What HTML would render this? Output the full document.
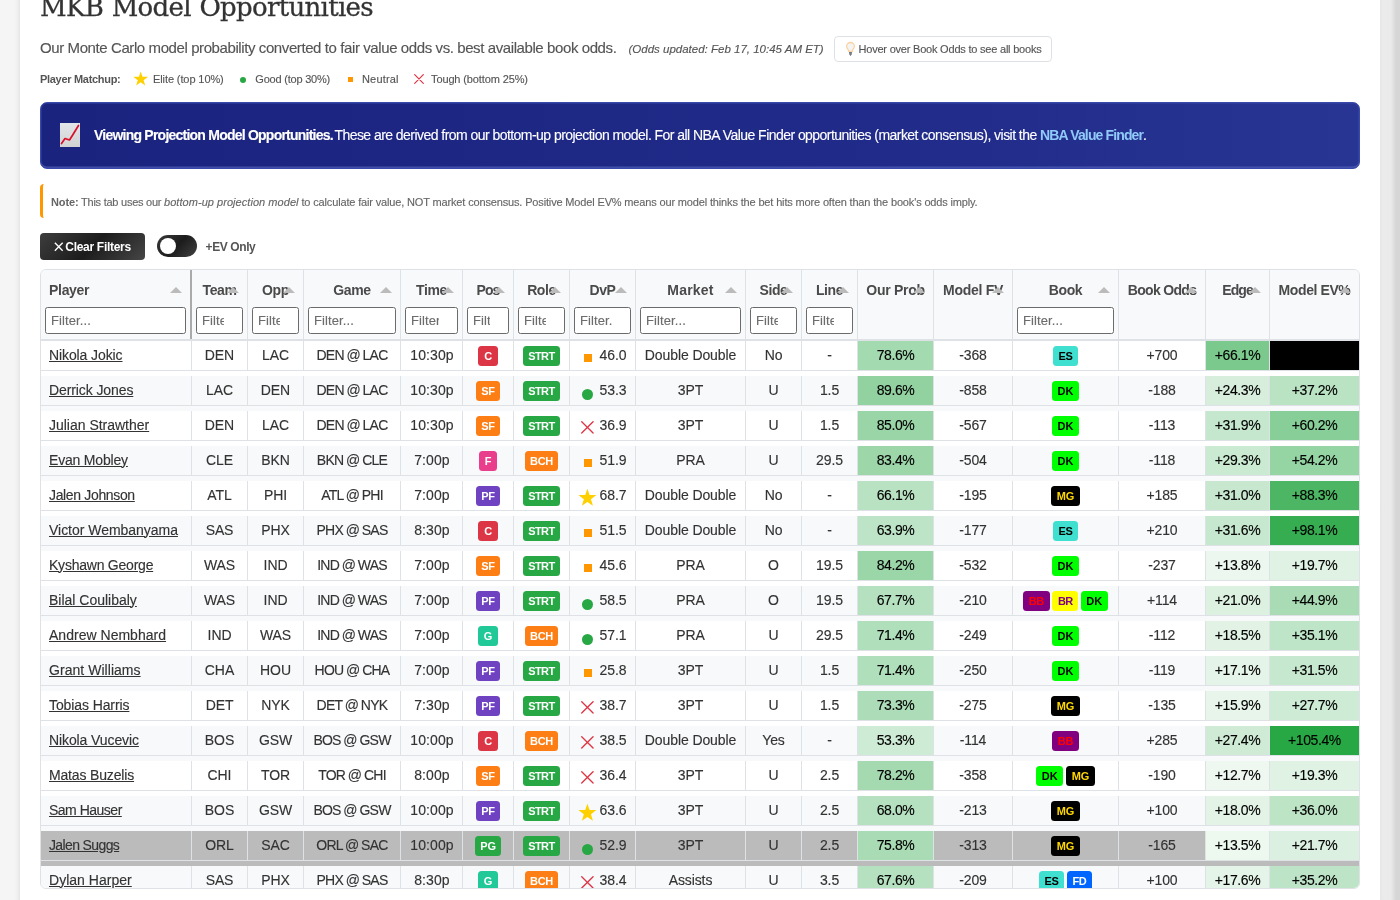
<!DOCTYPE html>
<html lang="en">
<head>
<meta charset="utf-8">
<title>MKB Model Opportunities</title>
<style>
*{box-sizing:border-box;margin:0;padding:0}
html,body{width:1400px;height:900px;overflow:hidden}
body{background:#f5f5f5;font-family:"Liberation Sans",sans-serif;color:#333;position:relative}
#root{position:absolute;left:0;top:0;width:1400px;height:900px;overflow:hidden;will-change:transform}
.page{position:absolute;left:20px;top:-40px;width:1360px;height:980px;background:#fff;box-shadow:0 0 6px rgba(0,0,0,.13)}
.rstrip{position:absolute;left:1380px;top:0;width:20px;height:900px;background:linear-gradient(90deg,#e5e6e6 0,#ebebeb 3px,#eaeaea 11px,#e2e2e2 13px,#d6d6d6 16px,#d6d6d6 20px)}
.t{position:absolute;white-space:pre;line-height:1}
.title{left:40px;top:-8.500px;font:400 26px/30px "DejaVu Serif","Liberation Serif",serif;color:#333;letter-spacing:-.69px;word-spacing:1px;-webkit-text-stroke:.3px #333}
.sub{left:40px;top:38px;font-size:15px;line-height:20px;color:#555;letter-spacing:-.405px}
.upd{left:628.500px;top:40px;font-size:11.500px;line-height:18px;color:#555;font-style:italic;letter-spacing:0}
.tip{position:absolute;left:834px;top:36px;width:218px;height:26px;border:1px solid #dee2e6;border-radius:4px;background:#fff}
.tip .t{left:23.500px;top:5px;font-size:11px;line-height:14px;color:#555;letter-spacing:-.21px}
.tip svg{position:absolute;left:9px;top:4px}
.lg{font-size:11px;line-height:14px;color:#555;top:72px}
.lg.b{font-weight:700;letter-spacing:-.3px}
.banner{position:absolute;left:40px;top:102px;width:1320px;height:67px;border-radius:7px;border:1px solid #3949ab;box-shadow:inset 0 0 0 1px rgba(57,73,171,.45),inset 0 -1.500px 0 rgba(110,125,205,.5);background:linear-gradient(90deg,#1a237e 0%,#202a88 60%,#283593 100%)}
.banner .t{top:23.100px;font-size:14px;line-height:18px;color:#fff}
.banner svg{position:absolute;left:18px;top:19px}
.note{position:absolute;left:40px;top:184px;width:1320px;height:34px;border-left:3px solid #ff9800;border-radius:4px;background:#fff}
.note .t{left:8px;top:11.700px;font-size:11px;line-height:13px;color:#666;letter-spacing:-.13px}
.btn{position:absolute;left:40px;top:233px;width:105px;height:27px;border-radius:4px;background:linear-gradient(135deg,#3d3d3d 0%,#1c1c1c 50%,#464646 100%);color:#fff}
.btn .t{left:25.300px;top:6.700px;font-size:12px;line-height:15px;font-weight:700;letter-spacing:-.3px;color:#fff}
.btn svg{position:absolute;left:14px;top:9.300px}
.tog{position:absolute;left:157px;top:235px;width:40px;height:22px;border-radius:11px;background:linear-gradient(135deg,#3a3a3a 0%,#1c1c1c 50%,#424242 100%)}
.tog i{position:absolute;left:3px;top:3px;width:16px;height:16px;border-radius:50%;background:#fff}
.evo{left:205.600px;top:239.500px;font-size:12px;line-height:15px;font-weight:700;color:#555;letter-spacing:-.405px}

.tbl{position:absolute;left:40px;top:269px;width:1320px;height:620px;border:1px solid #dee2e6;border-radius:6px;overflow:hidden;background:#fff;font-size:14px}
.thead{display:flex;height:71px;background:#f8f9fa;border-bottom:2px solid #dee2e6}
.h{position:relative;height:69px;border-right:1px solid #dee2e6;flex:none}
.h.hp{border-right:2px solid #aaa}
.ht{position:absolute;left:0;right:0;top:11.300px;height:18px;line-height:18px;text-align:center;font-weight:700;color:#4a4a4a;white-space:nowrap;letter-spacing:-.4px}
.hp .ht{text-align:left;padding-left:8px}
.ar{position:absolute;right:8px;top:16.700px;width:0;height:0;border-left:6px solid transparent;border-right:6px solid transparent;border-bottom:6px solid #bbb}
.fi{position:absolute;left:4px;right:4px;top:37px;height:27px;border:1px solid #6b6b6b;border-radius:2.500px;background:#fff;overflow:hidden}
.fi span{position:absolute;left:5px;right:18px;overflow:hidden;top:5px;font-size:13px;line-height:15px;color:#6c6c6c;white-space:nowrap;letter-spacing:.1px}
.r{display:flex;height:35px;background:#fff}
.r.ev{background:#f8f9fa}
.r.hv{background:#bbb}
.c{flex:none;height:30px;border-right:1px solid #dee2e6;border-bottom:1px solid #dee2e6;display:flex;align-items:center;justify-content:center;white-space:nowrap;color:#333;letter-spacing:-.1px;position:relative;padding-bottom:2px}
.c,.sub,.upd,.lg,.note .t,.tip .t,.banner .t,.fi span{-webkit-text-stroke:.13px currentColor}
.bd,.lg.b,b,.ht{-webkit-text-stroke:0 transparent}
.c.pl{justify-content:flex-start;padding-left:8px}
.c.gm{letter-spacing:-.75px;word-spacing:-.5px}
.c.tm{letter-spacing:.1px;padding-left:1px}
.c.pl a{text-decoration:underline;color:#333}
.c.g{color:#000;letter-spacing:-.4px}
.bd{display:inline-block;height:19.800px;line-height:20.600px;padding:0 5.500px;border-radius:3.500px;text-align:center;font-size:11px;font-weight:700;color:#fff;letter-spacing:-.3px;margin-top:3.200px}
.bk .bd{margin-left:1.400px;margin-right:1.400px}
.pC{background:#dc3545;min-width:19.400px}.pSF{background:#fd7e14}.pF{background:#e83e8c}.pPF{background:#6f42c1}.pG{background:#20c997}.pPG{background:#28a745}
.rSTRT{background:#28a745;letter-spacing:-.55px;padding:0 5.700px 0 5.500px}.rBCH{background:#fd7e14}
.kES{background:#40e0d0;color:#000}.kDK{background:#00ff00;color:#000;letter-spacing:.1px}.kMG{background:#000;color:#ffd700;letter-spacing:-.1px}.kBB{background:#800080;color:#ff0000;letter-spacing:-.2px}.kBR{background:#ffff00;color:#800080;letter-spacing:-.65px}.kFD{background:#0066ff;color:#fff}
.dvp{justify-content:flex-start}
.ic{position:absolute;display:block}
.ic.sq{left:14px;top:13px;width:8px;height:8px;background:#ff9800}
.ic.ci{left:12px;top:12.5px;width:11px;height:11px;border-radius:50%;background:#28a745}
.ic.xx{left:10.900px;top:10.100px;width:12.800px;height:12.800px}
.ic.st{left:8.300px;top:7.100px;width:18.800px;height:18.800px}
.ic svg{display:block}
.dv{position:absolute;right:8.400px;top:0;line-height:29px;letter-spacing:-.05px}
</style>
</head>
<body>
<div id="root">
<div class="page"></div>
<div class="rstrip"></div>

<div class="t title">MKB Model Opportunities</div>
<div class="t sub">Our Monte Carlo model probability converted to fair value odds vs. best available book odds.</div>
<div class="t upd">(Odds updated: Feb 17, 10:45 AM ET)</div>
<div class="tip">
<svg width="12" height="17" viewBox="0 0 12 17"><path d="M6.500 1.500c-2.300 0-3.900 1.700-3.900 3.800 0 1.400.7 2.300 1.400 3.100.5.600.8 1.200.8 1.900h3.400c0-.7.300-1.300.8-1.900.7-.8 1.400-1.700 1.400-3.100 0-2.100-1.600-3.800-3.900-3.800z" fill="#f4f4f4" stroke="#fbd3a0" stroke-width="1.300"/><path d="M4.900 11h3.200l-.4 2.200-1.200 2-1.200-2z" fill="#777c85"/></svg>
<div class="t">Hover over Book Odds to see all books</div>
</div>

<div class="t lg b" style="left:40px">Player Matchup:</div>
<svg style="position:absolute;left:133.200px;top:71px" width="15.400" height="15.400" viewBox="0 0 18 18"><path d="M9 0.6 L11.1 6.6 L17.6 6.8 L12.4 10.700 L14.3 17 L9 13.3 L3.700 17 L5.600 10.700 L0.400 6.800 L6.900 6.600 Z" fill="#ffd000"/></svg>
<div class="t lg" style="left:153px;letter-spacing:-.1px">Elite (top 10%)</div>
<i style="position:absolute;left:240px;top:76.800px;width:6.300px;height:6.300px;border-radius:50%;background:#28a745"></i>
<div class="t lg" style="left:255.300px;letter-spacing:-.21px">Good (top 30%)</div>
<i style="position:absolute;left:348px;top:77px;width:5px;height:5px;background:#ff9800"></i>
<div class="t lg" style="left:362px;letter-spacing:.18px">Neutral</div>
<svg style="position:absolute;left:414px;top:74px" width="10" height="10" viewBox="0 0 10 10"><path d="M.7.700l8.600 8.600M9.300.700L.7 9.300" stroke="#dc3545" stroke-width="1.200" fill="none" stroke-linecap="round"/></svg>
<div class="t lg" style="left:431px;letter-spacing:-.12px">Tough (bottom 25%)</div>

<div class="banner">
<svg width="22" height="26" viewBox="0 0 22 26"><defs><linearGradient id="cg" x1="0" y1="0" x2="0" y2="1"><stop offset="0" stop-color="#e2e5e9"/><stop offset="1" stop-color="#d2d2d2"/></linearGradient></defs><rect x="1" y="1" width="20" height="24" fill="url(#cg)"/><path d="M2.500 21.500l3.500-5 4.500 1.500 3.500-5.500L19.500 3.500" stroke="#d8102a" stroke-width="1.700" fill="none" stroke-linejoin="round" stroke-linecap="round"/></svg>
<div class="t" style="left:53px;font-weight:700;letter-spacing:-.77px">Viewing Projection Model Opportunities.</div>
<div class="t" style="left:293.400px;letter-spacing:-.545px">These are derived from our bottom-up projection model. For all NBA Value Finder opportunities (market consensus), visit the <b style="color:#90caf9;letter-spacing:-.87px">NBA Value Finder</b>.</div>
</div>

<div class="note"><div class="t"><b>Note:</b><span style="letter-spacing:-.25px"> This tab uses our </span><i style="letter-spacing:.047px">bottom-up projection model</i><span style="letter-spacing:-.153px"> to calculate fair value, NOT market consensus. Positive Model EV% means our model thinks the bet hits more often than the book's odds imply.</span></div></div>

<div class="btn"><svg width="9.500" height="9.500" viewBox="0 0 9 9"><path d="M.8.800l7.400 7.400M8.200.800L.8 8.200" stroke="#fff" stroke-width="1.300" fill="none"/></svg><div class="t">Clear Filters</div></div>
<div class="tog"><i></i></div>
<div class="t evo">+EV Only</div>

<div class="tbl">
<div class="thead"><div class="h hp" style="width:151px"><div class="ht" style="letter-spacing:-0.3px"><span>Player</span></div><i class="ar"></i><div class="fi"><span>Filter...</span></div></div><div class="h" style="width:56px"><div class="ht"><span>Team</span></div><i class="ar"></i><div class="fi"><span>Filter...</span></div></div><div class="h" style="width:56px"><div class="ht"><span>Opp</span></div><i class="ar"></i><div class="fi"><span>Filter...</span></div></div><div class="h" style="width:97px"><div class="ht"><span>Game</span></div><i class="ar"></i><div class="fi"><span>Filter...</span></div></div><div class="h" style="width:62px"><div class="ht"><span>Time</span></div><i class="ar"></i><div class="fi"><span>Filter...</span></div></div><div class="h" style="width:51px"><div class="ht" style="letter-spacing:-0.9px"><span>Pos</span></div><i class="ar"></i><div class="fi"><span>Filter...</span></div></div><div class="h" style="width:56px"><div class="ht"><span>Role</span></div><i class="ar"></i><div class="fi"><span>Filter...</span></div></div><div class="h" style="width:66px"><div class="ht"><span>DvP</span></div><i class="ar"></i><div class="fi"><span>Filter...</span></div></div><div class="h" style="width:110px"><div class="ht" style="letter-spacing:0.2px"><span>Market</span></div><i class="ar"></i><div class="fi"><span>Filter...</span></div></div><div class="h" style="width:56px"><div class="ht"><span>Side</span></div><i class="ar"></i><div class="fi"><span>Filter...</span></div></div><div class="h" style="width:56px"><div class="ht"><span>Line</span></div><i class="ar"></i><div class="fi"><span>Filter...</span></div></div><div class="h" style="width:76px"><div class="ht" style="letter-spacing:-0.29px"><span>Our Prob</span></div><i class="ar"></i></div><div class="h" style="width:79px"><div class="ht" style="letter-spacing:-0.29px"><span>Model FV</span></div><i class="ar"></i></div><div class="h" style="width:106px"><div class="ht"><span>Book</span></div><i class="ar"></i><div class="fi"><span>Filter...</span></div></div><div class="h" style="width:87px"><div class="ht" style="letter-spacing:-0.69px"><span>Book Odds</span></div><i class="ar"></i></div><div class="h" style="width:64px"><div class="ht" style="letter-spacing:-0.93px"><span>Edge</span></div><i class="ar"></i></div><div class="h" style="width:90px"><div class="ht"><span>Model EV%</span></div><i class="ar"></i></div></div>
<div class="tbody"><div class="r"><div class="c pl" style="width:151px;"><a style="letter-spacing:-0.100px">Nikola Jokic</a></div><div class="c" style="width:56px;">DEN</div><div class="c" style="width:56px;">LAC</div><div class="c gm" style="width:97px;">DEN @ LAC</div><div class="c tm" style="width:62px;">10:30p</div><div class="c" style="width:51px;"><b class="bd pC">C</b></div><div class="c" style="width:56px;"><b class="bd rSTRT">STRT</b></div><div class="c dvp" style="width:66px;"><i class="ic sq"></i><span class="dv">46.0</span></div><div class="c" style="width:110px;">Double Double</div><div class="c" style="width:56px;">No</div><div class="c" style="width:56px;">-</div><div class="c g" style="width:76px;background:#a4dab0;">78.6%</div><div class="c" style="width:79px;">-368</div><div class="c bk" style="width:106px;"><b class="bd kES">ES</b></div><div class="c" style="width:87px;">+700</div><div class="c g" style="width:64px;background:#7cc98d;">+66.1%</div><div class="c g" style="width:90px;background:#000;color:#000;">+528.8%</div></div>
<div class="r ev"><div class="c pl" style="width:151px;"><a style="letter-spacing:-0.100px">Derrick Jones</a></div><div class="c" style="width:56px;">LAC</div><div class="c" style="width:56px;">DEN</div><div class="c gm" style="width:97px;">DEN @ LAC</div><div class="c tm" style="width:62px;">10:30p</div><div class="c" style="width:51px;"><b class="bd pSF">SF</b></div><div class="c" style="width:56px;"><b class="bd rSTRT">STRT</b></div><div class="c dvp" style="width:66px;"><i class="ic ci"></i><span class="dv">53.3</span></div><div class="c" style="width:110px;">3PT</div><div class="c" style="width:56px;">U</div><div class="c" style="width:56px;">1.5</div><div class="c g" style="width:76px;background:#92d2a0;">89.6%</div><div class="c" style="width:79px;">-858</div><div class="c bk" style="width:106px;"><b class="bd kDK">DK</b></div><div class="c" style="width:87px;">-188</div><div class="c g" style="width:64px;background:#d6eedb;">+24.3%</div><div class="c g" style="width:90px;background:#bae3c3;">+37.2%</div></div>
<div class="r"><div class="c pl" style="width:151px;"><a style="letter-spacing:-0.013px">Julian Strawther</a></div><div class="c" style="width:56px;">DEN</div><div class="c" style="width:56px;">LAC</div><div class="c gm" style="width:97px;">DEN @ LAC</div><div class="c tm" style="width:62px;">10:30p</div><div class="c" style="width:51px;"><b class="bd pSF">SF</b></div><div class="c" style="width:56px;"><b class="bd rSTRT">STRT</b></div><div class="c dvp" style="width:66px;"><i class="ic xx"><svg width="12.8" height="12.8" viewBox="0 0 14 14"><path d="M0.8 0.8 L13.2 13.2 M13.2 0.8 L0.8 13.2" stroke="#dc3545" stroke-width="1.45" fill="none" stroke-linecap="round"/></svg></i><span class="dv">36.9</span></div><div class="c" style="width:110px;">3PT</div><div class="c" style="width:56px;">U</div><div class="c" style="width:56px;">1.5</div><div class="c g" style="width:76px;background:#99d5a7;">85.0%</div><div class="c" style="width:79px;">-567</div><div class="c bk" style="width:106px;"><b class="bd kDK">DK</b></div><div class="c" style="width:87px;">-113</div><div class="c g" style="width:64px;background:#c5e7cd;">+31.9%</div><div class="c g" style="width:90px;background:#88ce98;">+60.2%</div></div>
<div class="r ev"><div class="c pl" style="width:151px;"><a style="letter-spacing:-0.191px">Evan Mobley</a></div><div class="c" style="width:56px;">CLE</div><div class="c" style="width:56px;">BKN</div><div class="c gm" style="width:97px;">BKN @ CLE</div><div class="c tm" style="width:62px;">7:00p</div><div class="c" style="width:51px;"><b class="bd pF">F</b></div><div class="c" style="width:56px;"><b class="bd rBCH">BCH</b></div><div class="c dvp" style="width:66px;"><i class="ic sq"></i><span class="dv">51.9</span></div><div class="c" style="width:110px;">PRA</div><div class="c" style="width:56px;">U</div><div class="c" style="width:56px;">29.5</div><div class="c g" style="width:76px;background:#9cd6a9;">83.4%</div><div class="c" style="width:79px;">-504</div><div class="c bk" style="width:106px;"><b class="bd kDK">DK</b></div><div class="c" style="width:87px;">-118</div><div class="c g" style="width:64px;background:#cbead2;">+29.3%</div><div class="c g" style="width:90px;background:#95d4a3;">+54.2%</div></div>
<div class="r"><div class="c pl" style="width:151px;"><a style="letter-spacing:-0.346px">Jalen Johnson</a></div><div class="c" style="width:56px;">ATL</div><div class="c" style="width:56px;">PHI</div><div class="c gm" style="width:97px;">ATL @ PHI</div><div class="c tm" style="width:62px;">7:00p</div><div class="c" style="width:51px;"><b class="bd pPF">PF</b></div><div class="c" style="width:56px;"><b class="bd rSTRT">STRT</b></div><div class="c dvp" style="width:66px;"><i class="ic st"><svg width="18.8" height="18.8" viewBox="0 0 18 18"><path d="M9 0.6 L11.1 6.6 L17.6 6.8 L12.4 10.7 L14.3 17 L9 13.3 L3.7 17 L5.6 10.7 L0.4 6.8 L6.9 6.6 Z" fill="#ffd000"/></svg></i><span class="dv">68.7</span></div><div class="c" style="width:110px;">Double Double</div><div class="c" style="width:56px;">No</div><div class="c" style="width:56px;">-</div><div class="c g" style="width:76px;background:#b9e2c2;">66.1%</div><div class="c" style="width:79px;">-195</div><div class="c bk" style="width:106px;"><b class="bd kMG">MG</b></div><div class="c" style="width:87px;">+185</div><div class="c g" style="width:64px;background:#c7e8cf;">+31.0%</div><div class="c g" style="width:90px;background:#4cb664;">+88.3%</div></div>
<div class="r ev"><div class="c pl" style="width:151px;"><a style="letter-spacing:-0.029px">Victor Wembanyama</a></div><div class="c" style="width:56px;">SAS</div><div class="c" style="width:56px;">PHX</div><div class="c gm" style="width:97px;">PHX @ SAS</div><div class="c tm" style="width:62px;">8:30p</div><div class="c" style="width:51px;"><b class="bd pC">C</b></div><div class="c" style="width:56px;"><b class="bd rSTRT">STRT</b></div><div class="c dvp" style="width:66px;"><i class="ic sq"></i><span class="dv">51.5</span></div><div class="c" style="width:110px;">Double Double</div><div class="c" style="width:56px;">No</div><div class="c" style="width:56px;">-</div><div class="c g" style="width:76px;background:#bde4c6;">63.9%</div><div class="c" style="width:79px;">-177</div><div class="c bk" style="width:106px;"><b class="bd kES">ES</b></div><div class="c" style="width:87px;">+210</div><div class="c g" style="width:64px;background:#c6e8ce;">+31.6%</div><div class="c g" style="width:90px;background:#37ad52;">+98.1%</div></div>
<div class="r"><div class="c pl" style="width:151px;"><a style="letter-spacing:-0.229px">Kyshawn George</a></div><div class="c" style="width:56px;">WAS</div><div class="c" style="width:56px;">IND</div><div class="c gm" style="width:97px;">IND @ WAS</div><div class="c tm" style="width:62px;">7:00p</div><div class="c" style="width:51px;"><b class="bd pSF">SF</b></div><div class="c" style="width:56px;"><b class="bd rSTRT">STRT</b></div><div class="c dvp" style="width:66px;"><i class="ic sq"></i><span class="dv">45.6</span></div><div class="c" style="width:110px;">PRA</div><div class="c" style="width:56px;">O</div><div class="c" style="width:56px;">19.5</div><div class="c g" style="width:76px;background:#9bd6a8;">84.2%</div><div class="c" style="width:79px;">-532</div><div class="c bk" style="width:106px;"><b class="bd kDK">DK</b></div><div class="c" style="width:87px;">-237</div><div class="c g" style="width:64px;background:#ecf7ef;">+13.8%</div><div class="c g" style="width:90px;background:#dff2e4;">+19.7%</div></div>
<div class="r ev"><div class="c pl" style="width:151px;"><a style="letter-spacing:-0.007px">Bilal Coulibaly</a></div><div class="c" style="width:56px;">WAS</div><div class="c" style="width:56px;">IND</div><div class="c gm" style="width:97px;">IND @ WAS</div><div class="c tm" style="width:62px;">7:00p</div><div class="c" style="width:51px;"><b class="bd pPF">PF</b></div><div class="c" style="width:56px;"><b class="bd rSTRT">STRT</b></div><div class="c dvp" style="width:66px;"><i class="ic ci"></i><span class="dv">58.5</span></div><div class="c" style="width:110px;">PRA</div><div class="c" style="width:56px;">O</div><div class="c" style="width:56px;">19.5</div><div class="c g" style="width:76px;background:#b6e1c0;">67.7%</div><div class="c" style="width:79px;">-210</div><div class="c bk" style="width:106px;"><b class="bd kBB">BB</b><b class="bd kBR">BR</b><b class="bd kDK">DK</b></div><div class="c" style="width:87px;">+114</div><div class="c g" style="width:64px;background:#ddf1e1;">+21.0%</div><div class="c g" style="width:90px;background:#a9dcb5;">+44.9%</div></div>
<div class="r"><div class="c pl" style="width:151px;"><a style="letter-spacing:0.020px">Andrew Nembhard</a></div><div class="c" style="width:56px;">IND</div><div class="c" style="width:56px;">WAS</div><div class="c gm" style="width:97px;">IND @ WAS</div><div class="c tm" style="width:62px;">7:00p</div><div class="c" style="width:51px;"><b class="bd pG">G</b></div><div class="c" style="width:56px;"><b class="bd rBCH">BCH</b></div><div class="c dvp" style="width:66px;"><i class="ic ci"></i><span class="dv">57.1</span></div><div class="c" style="width:110px;">PRA</div><div class="c" style="width:56px;">U</div><div class="c" style="width:56px;">29.5</div><div class="c g" style="width:76px;background:#b0dfbb;">71.4%</div><div class="c" style="width:79px;">-249</div><div class="c bk" style="width:106px;"><b class="bd kDK">DK</b></div><div class="c" style="width:87px;">-112</div><div class="c g" style="width:64px;background:#e2f3e6;">+18.5%</div><div class="c g" style="width:90px;background:#bee5c7;">+35.1%</div></div>
<div class="r ev"><div class="c pl" style="width:151px;"><a style="letter-spacing:0.043px">Grant Williams</a></div><div class="c" style="width:56px;">CHA</div><div class="c" style="width:56px;">HOU</div><div class="c gm" style="width:97px;">HOU @ CHA</div><div class="c tm" style="width:62px;">7:00p</div><div class="c" style="width:51px;"><b class="bd pPF">PF</b></div><div class="c" style="width:56px;"><b class="bd rSTRT">STRT</b></div><div class="c dvp" style="width:66px;"><i class="ic sq"></i><span class="dv">25.8</span></div><div class="c" style="width:110px;">3PT</div><div class="c" style="width:56px;">U</div><div class="c" style="width:56px;">1.5</div><div class="c g" style="width:76px;background:#b0dfbb;">71.4%</div><div class="c" style="width:79px;">-250</div><div class="c bk" style="width:106px;"><b class="bd kDK">DK</b></div><div class="c" style="width:87px;">-119</div><div class="c g" style="width:64px;background:#e5f4e8;">+17.1%</div><div class="c g" style="width:90px;background:#c6e8ce;">+31.5%</div></div>
<div class="r"><div class="c pl" style="width:151px;"><a style="letter-spacing:-0.100px">Tobias Harris</a></div><div class="c" style="width:56px;">DET</div><div class="c" style="width:56px;">NYK</div><div class="c gm" style="width:97px;">DET @ NYK</div><div class="c tm" style="width:62px;">7:30p</div><div class="c" style="width:51px;"><b class="bd pPF">PF</b></div><div class="c" style="width:56px;"><b class="bd rSTRT">STRT</b></div><div class="c dvp" style="width:66px;"><i class="ic xx"><svg width="12.8" height="12.8" viewBox="0 0 14 14"><path d="M0.8 0.8 L13.2 13.2 M13.2 0.8 L0.8 13.2" stroke="#dc3545" stroke-width="1.45" fill="none" stroke-linecap="round"/></svg></i><span class="dv">38.7</span></div><div class="c" style="width:110px;">3PT</div><div class="c" style="width:56px;">U</div><div class="c" style="width:56px;">1.5</div><div class="c g" style="width:76px;background:#adddb8;">73.3%</div><div class="c" style="width:79px;">-275</div><div class="c bk" style="width:106px;"><b class="bd kMG">MG</b></div><div class="c" style="width:87px;">-135</div><div class="c g" style="width:64px;background:#e8f5eb;">+15.9%</div><div class="c g" style="width:90px;background:#ceebd5;">+27.7%</div></div>
<div class="r ev"><div class="c pl" style="width:151px;"><a style="letter-spacing:-0.100px">Nikola Vucevic</a></div><div class="c" style="width:56px;">BOS</div><div class="c" style="width:56px;">GSW</div><div class="c gm" style="width:97px;">BOS @ GSW</div><div class="c tm" style="width:62px;">10:00p</div><div class="c" style="width:51px;"><b class="bd pC">C</b></div><div class="c" style="width:56px;"><b class="bd rBCH">BCH</b></div><div class="c dvp" style="width:66px;"><i class="ic xx"><svg width="12.8" height="12.8" viewBox="0 0 14 14"><path d="M0.8 0.8 L13.2 13.2 M13.2 0.8 L0.8 13.2" stroke="#dc3545" stroke-width="1.45" fill="none" stroke-linecap="round"/></svg></i><span class="dv">38.5</span></div><div class="c" style="width:110px;">Double Double</div><div class="c" style="width:56px;">Yes</div><div class="c" style="width:56px;">-</div><div class="c g" style="width:76px;background:#ceebd5;">53.3%</div><div class="c" style="width:79px;">-114</div><div class="c bk" style="width:106px;"><b class="bd kBB">BB</b></div><div class="c" style="width:87px;">+285</div><div class="c g" style="width:64px;background:#cfebd5;">+27.4%</div><div class="c g" style="width:90px;background:#28a745;">+105.4%</div></div>
<div class="r"><div class="c pl" style="width:151px;"><a style="letter-spacing:-0.162px">Matas Buzelis</a></div><div class="c" style="width:56px;">CHI</div><div class="c" style="width:56px;">TOR</div><div class="c gm" style="width:97px;">TOR @ CHI</div><div class="c tm" style="width:62px;">8:00p</div><div class="c" style="width:51px;"><b class="bd pSF">SF</b></div><div class="c" style="width:56px;"><b class="bd rSTRT">STRT</b></div><div class="c dvp" style="width:66px;"><i class="ic xx"><svg width="12.8" height="12.8" viewBox="0 0 14 14"><path d="M0.8 0.8 L13.2 13.2 M13.2 0.8 L0.8 13.2" stroke="#dc3545" stroke-width="1.45" fill="none" stroke-linecap="round"/></svg></i><span class="dv">36.4</span></div><div class="c" style="width:110px;">3PT</div><div class="c" style="width:56px;">U</div><div class="c" style="width:56px;">2.5</div><div class="c g" style="width:76px;background:#a5dab1;">78.2%</div><div class="c" style="width:79px;">-358</div><div class="c bk" style="width:106px;"><b class="bd kDK">DK</b><b class="bd kMG">MG</b></div><div class="c" style="width:87px;">-190</div><div class="c g" style="width:64px;background:#eef8f1;">+12.7%</div><div class="c g" style="width:90px;background:#e0f2e4;">+19.3%</div></div>
<div class="r ev"><div class="c pl" style="width:151px;"><a style="letter-spacing:-0.500px">Sam Hauser</a></div><div class="c" style="width:56px;">BOS</div><div class="c" style="width:56px;">GSW</div><div class="c gm" style="width:97px;">BOS @ GSW</div><div class="c tm" style="width:62px;">10:00p</div><div class="c" style="width:51px;"><b class="bd pPF">PF</b></div><div class="c" style="width:56px;"><b class="bd rSTRT">STRT</b></div><div class="c dvp" style="width:66px;"><i class="ic st"><svg width="18.8" height="18.8" viewBox="0 0 18 18"><path d="M9 0.6 L11.1 6.6 L17.6 6.8 L12.4 10.7 L14.3 17 L9 13.3 L3.7 17 L5.6 10.7 L0.4 6.8 L6.9 6.6 Z" fill="#ffd000"/></svg></i><span class="dv">63.6</span></div><div class="c" style="width:110px;">3PT</div><div class="c" style="width:56px;">U</div><div class="c" style="width:56px;">2.5</div><div class="c g" style="width:76px;background:#b6e1c0;">68.0%</div><div class="c" style="width:79px;">-213</div><div class="c bk" style="width:106px;"><b class="bd kMG">MG</b></div><div class="c" style="width:87px;">+100</div><div class="c g" style="width:64px;background:#e3f4e7;">+18.0%</div><div class="c g" style="width:90px;background:#bce4c5;">+36.0%</div></div>
<div class="r hv"><div class="c pl" style="width:151px;"><a style="letter-spacing:-0.627px">Jalen Suggs</a></div><div class="c" style="width:56px;">ORL</div><div class="c" style="width:56px;">SAC</div><div class="c gm" style="width:97px;">ORL @ SAC</div><div class="c tm" style="width:62px;">10:00p</div><div class="c" style="width:51px;"><b class="bd pPG">PG</b></div><div class="c" style="width:56px;"><b class="bd rSTRT">STRT</b></div><div class="c dvp" style="width:66px;"><i class="ic ci"></i><span class="dv">52.9</span></div><div class="c" style="width:110px;">3PT</div><div class="c" style="width:56px;">U</div><div class="c" style="width:56px;">2.5</div><div class="c g" style="width:76px;background:#a9dcb4;">75.8%</div><div class="c" style="width:79px;">-313</div><div class="c bk" style="width:106px;"><b class="bd kMG">MG</b></div><div class="c" style="width:87px;">-165</div><div class="c g" style="width:64px;background:#edf8ef;">+13.5%</div><div class="c g" style="width:90px;background:#dbf0e0;">+21.7%</div></div>
<div class="r ev"><div class="c pl" style="width:151px;"><a style="letter-spacing:0.025px">Dylan Harper</a></div><div class="c" style="width:56px;">SAS</div><div class="c" style="width:56px;">PHX</div><div class="c gm" style="width:97px;">PHX @ SAS</div><div class="c tm" style="width:62px;">8:30p</div><div class="c" style="width:51px;"><b class="bd pG">G</b></div><div class="c" style="width:56px;"><b class="bd rBCH">BCH</b></div><div class="c dvp" style="width:66px;"><i class="ic xx"><svg width="12.8" height="12.8" viewBox="0 0 14 14"><path d="M0.8 0.8 L13.2 13.2 M13.2 0.8 L0.8 13.2" stroke="#dc3545" stroke-width="1.45" fill="none" stroke-linecap="round"/></svg></i><span class="dv">38.4</span></div><div class="c" style="width:110px;">Assists</div><div class="c" style="width:56px;">U</div><div class="c" style="width:56px;">3.5</div><div class="c g" style="width:76px;background:#b6e1c0;">67.6%</div><div class="c" style="width:79px;">-209</div><div class="c bk" style="width:106px;"><b class="bd kES">ES</b><b class="bd kFD">FD</b></div><div class="c" style="width:87px;">+100</div><div class="c g" style="width:64px;background:#e4f4e8;">+17.6%</div><div class="c g" style="width:90px;background:#bee4c7;">+35.2%</div></div></div>
</div>
</div>
</body>
</html>
